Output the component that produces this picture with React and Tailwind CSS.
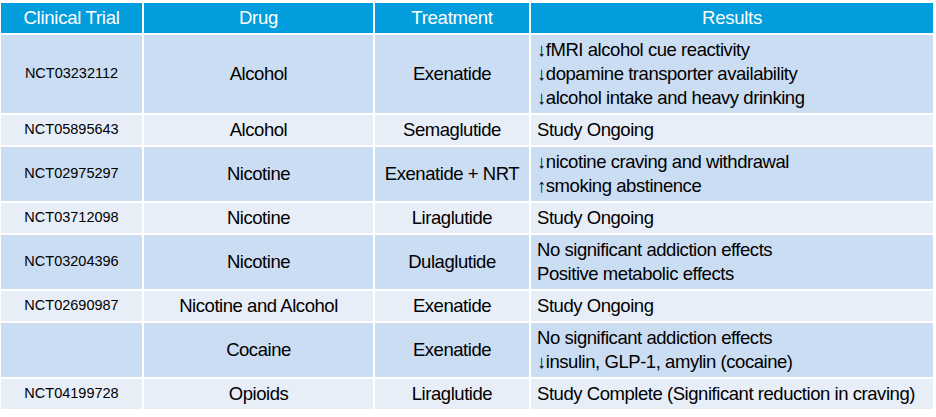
import React from "react";

const rows = [
  { id: "NCT03232112", drug: "Alcohol", tx: "Exenatide", res: [["↓", "fMRI alcohol cue reactivity"], ["↓", "dopamine transporter availability"], ["↓", "alcohol intake and heavy drinking"]], dark: true },
  { id: "NCT05895643", drug: "Alcohol", tx: "Semaglutide", res: [["", "Study Ongoing"]], dark: false },
  { id: "NCT02975297", drug: "Nicotine", tx: "Exenatide + NRT", res: [["↓", "nicotine craving and withdrawal"], ["↑", "smoking abstinence"]], dark: true },
  { id: "NCT03712098", drug: "Nicotine", tx: "Liraglutide", res: [["", "Study Ongoing"]], dark: false },
  { id: "NCT03204396", drug: "Nicotine", tx: "Dulaglutide", res: [["", "No significant addiction effects"], ["", "Positive metabolic effects"]], dark: true },
  { id: "NCT02690987", drug: "Nicotine and Alcohol", tx: "Exenatide", res: [["", "Study Ongoing"]], dark: false },
  { id: "", drug: "Cocaine", tx: "Exenatide", res: [["", "No significant addiction effects"], ["↓", "insulin, GLP-1, amylin (cocaine)"]], dark: true },
  { id: "NCT04199728", drug: "Opioids", tx: "Liraglutide", res: [["", "Study Complete (Significant reduction in craving)"]], dark: false },
];

export default function App() {
  return (
    <div className="w-[936px] h-[417px] bg-white pl-[1px] pt-[3px] font-['Liberation_Sans',Arial,sans-serif] text-[18.5px] tracking-[-0.45px] text-black">
      <div className="grid grid-cols-[141px_229px_154px_402px] gap-[2px]">
        {["Clinical Trial", "Drug", "Treatment", "Results"].map((h) => (
          <div key={h} className="bg-[#019ddd] text-white h-[30px] pt-[1px] flex items-center justify-center text-[18.6px] tracking-[-0.3px] leading-none">
            {h}
          </div>
        ))}
        {rows.map((r, i) => {
          const bg = r.dark ? "bg-[#cbddf2]" : "bg-[#e7eef8]";
          return (
            <React.Fragment key={i}>
              <div className={`${bg} flex items-center justify-center text-[14.5px] tracking-normal`}>{r.id}</div>
              <div className={`${bg} flex items-center justify-center`}>{r.drug}</div>
              <div className={`${bg} flex items-center justify-center`}>{r.tx}</div>
              <div className={`${bg} py-[3px] pl-[6px] flex flex-col justify-center leading-[24px]`}>
                {r.res.map(([a, t]) => (
                  <div key={t}>
                    {a}
                    {t}
                  </div>
                ))}
              </div>
            </React.Fragment>
          );
        })}
      </div>
    </div>
  );
}
